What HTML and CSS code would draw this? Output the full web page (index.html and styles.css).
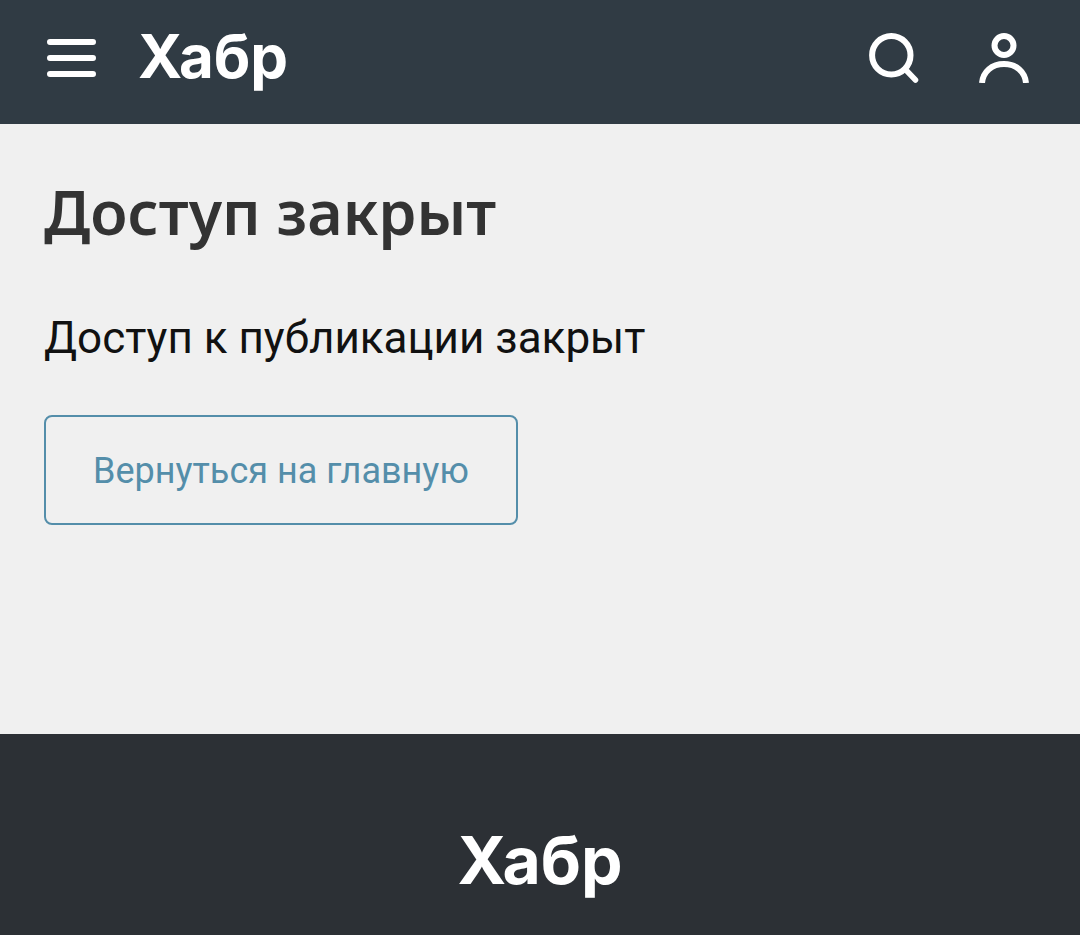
FILE: index.html
```html
<!DOCTYPE html>
<html lang="ru">
<head>
<meta charset="utf-8">
<meta name="viewport" content="width=device-width, initial-scale=1">
<title>Доступ закрыт</title>
<link rel="stylesheet" href="styles.css">
</head>
<body>
<header class="header">
  <button class="icon-button" type="button" aria-label="Меню">
    <svg width="50" height="50" viewBox="0 0 50 50" fill="none" stroke="currentColor" stroke-width="6" stroke-linecap="round"><path d="M4 9h43M4 25h43M4 41h43"/></svg>
  </button>
  <a class="logo" href="#">Хабр</a>
  <div class="actions">
    <button class="icon-button" type="button" aria-label="Поиск">
      <svg width="50" height="50" viewBox="0 0 50 50" fill="none" stroke="currentColor" stroke-width="6"><circle cx="22.300" cy="22.300" r="19.200"/><path d="M36 36l10.500 11" stroke-width="5.500" stroke-linecap="round"/></svg>
    </button>
    <button class="icon-button" type="button" aria-label="Войти">
      <svg width="50" height="50" viewBox="0 0 50 50" fill="none" stroke="currentColor" stroke-width="6"><circle cx="25" cy="12.500" r="9.500"/><path d="M3 50C4 38.500 13 31 25 31s21 7.500 22 19"/></svg>
    </button>
  </div>
</header>
<main class="content">
  <h1 class="title">Доступ закрыт</h1>
  <p class="message">Доступ к публикации закрыт</p>
  <a class="home-link" href="#">Вернуться на главную</a>
</main>
<footer class="footer">
  <a class="logo logo-large" href="#">Хабр</a>
</footer>
</body>
</html>
```
FILE: styles.css
```css
* { box-sizing: border-box; }
body {
  display: flex;
  flex-direction: column;
  min-height: 100vh;
  margin: 0;
  background: #f0f0f0;
  color: #111;
  font-family: Roboto, "Noto Sans", sans-serif;
}
.header {
  display: flex;
  align-items: center;
  padding: 20px 51px 32px 46px;
  background: #303b44;
}
.icon-button {
  display: block;
  padding: 0;
  border: 0;
  background: none;
  color: #fff;
}
.icon-button svg { display: block; }
.header .icon-button { margin-top: 3px; }
.logo {
  margin-left: 42px;
  color: #fff;
  font: 700 60px/72px Inter, sans-serif;
  text-decoration: none;
}
.actions {
  display: flex;
  gap: 60px;
  margin-left: auto;
}
.content {
  flex: 1;
  padding: 48px 44px;
}
.title {
  margin: 0;
  color: #333;
  font: 600 61px/80px "Noto Sans", sans-serif;
}
.message {
  margin: 60px 0 51px;
  font-size: 44px;
  line-height: 52px;
}
.home-link {
  display: inline-block;
  padding: 31px 47px 29px;
  border: 2px solid #548eaa;
  border-radius: 8px;
  color: #548eaa;
  font-size: 36px;
  line-height: 46px;
  text-decoration: none;
}
.footer {
  display: flex;
  justify-content: center;
  padding: 84px 44px 33px;
  background: #2c3035;
}
.logo-large {
  margin: 0;
  font-size: 66px;
  line-height: 84px;
}
```
